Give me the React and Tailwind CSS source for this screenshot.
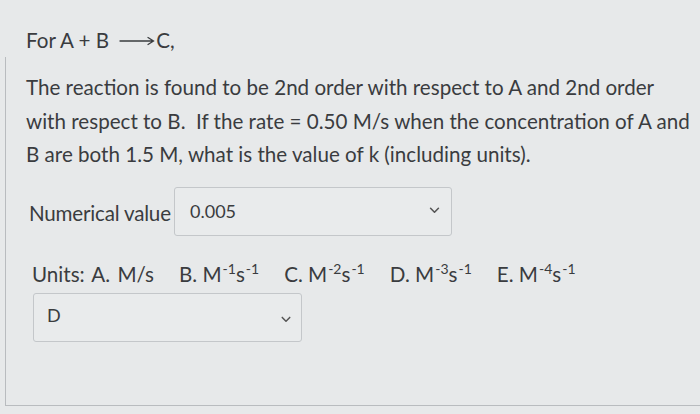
import React from 'react';

const units = [
  { key: 'B', m: '-1' },
  { key: 'C', m: '-2' },
  { key: 'D', m: '-3' },
  { key: 'E', m: '-4' },
];

function Chevron({ className }) {
  return (
    <svg viewBox="0 0 12 8" className={className} fill="none" stroke="currentColor" strokeWidth="1.8" strokeLinecap="round" strokeLinejoin="round">
      <path d="M1.5 1.5 6 6l4.5-4.5" />
    </svg>
  );
}

function Arrow() {
  return (
    <svg viewBox="0 0 36 10" className="ml-[10px] mr-[1px] inline-block h-[10px] w-[36px] align-[2px]" fill="none" stroke="currentColor" strokeWidth="1.3" strokeLinecap="round">
      <path d="M1 5h33M29 1.5 34.5 5 29 8.5" />
    </svg>
  );
}

function Sup({ children }) {
  return <span className="relative -top-[8px] ml-[1px] text-[14px]">{children}</span>;
}

export default function App() {
  return (
    <div
      className="h-[414px] w-[700px] overflow-hidden bg-[#e7e9ea] text-[20.6px] text-[#3a3c3f]"
      style={{ fontFamily: 'Lato, "Open Sans", sans-serif' }}
    >
      <div className="pl-[26px] pt-[24px] leading-[33px]">
        For A + B<Arrow />C,
      </div>
      <div className="ml-[5px] flex h-[349px] flex-col">
        <div className="flex flex-1">
          <div className="w-px bg-[#b9bcbf]" />
          <div className="flex-1 pt-[14px]">
            <p className="w-[690px] whitespace-nowrap pl-[20px] leading-[33.5px]">
              The reaction is found to be 2nd order with respect to A and 2nd order
              <br />
              with respect to B.&nbsp; If the rate = 0.50 M/s when the concentration of A and
              <br />
              B are both 1.5 M, what is the value of k (including units).
            </p>

            <div className="mt-[15px] flex items-center pl-[23px]">
              <span className="mt-[5px] w-[145px] tracking-[-0.2px]">Numerical value</span>
              <div className="flex h-[49px] w-[278px] items-start justify-between rounded-[3px] border border-[#c4c7ca] bg-[#e9ebec] pl-[15px] pr-[11px] pt-[11px]">
                <span className="text-[18px] leading-[24px]">0.005</span>
                <Chevron className="mt-[8px] h-[7px] w-[11px] text-[#555]" />
              </div>
            </div>

            <div className="mt-[23px] flex items-baseline pl-[26px] leading-[30px]">
              <span className="[word-spacing:2px]">Units: A. M/s</span>
              {units.map((u) => (
                <span key={u.key} className="ml-[25px]">
                  {u.key}. M<Sup>{u.m}</Sup>s<Sup>-1</Sup>
                </span>
              ))}
            </div>

            <div className="ml-[27px] mt-[1px] flex h-[49px] w-[269px] items-center justify-between rounded-[3px] border border-[#c4c7ca] bg-[#e9ebec] pl-[13px] pr-[10px]">
              <span className="mt-[-4px] text-[18px]">D</span>
              <Chevron className="mt-[5px] h-[7px] w-[10px] text-[#555]" />
            </div>
          </div>
        </div>
        <div className="h-px bg-[#b9bcbf]" />
      </div>
    </div>
  );
}
